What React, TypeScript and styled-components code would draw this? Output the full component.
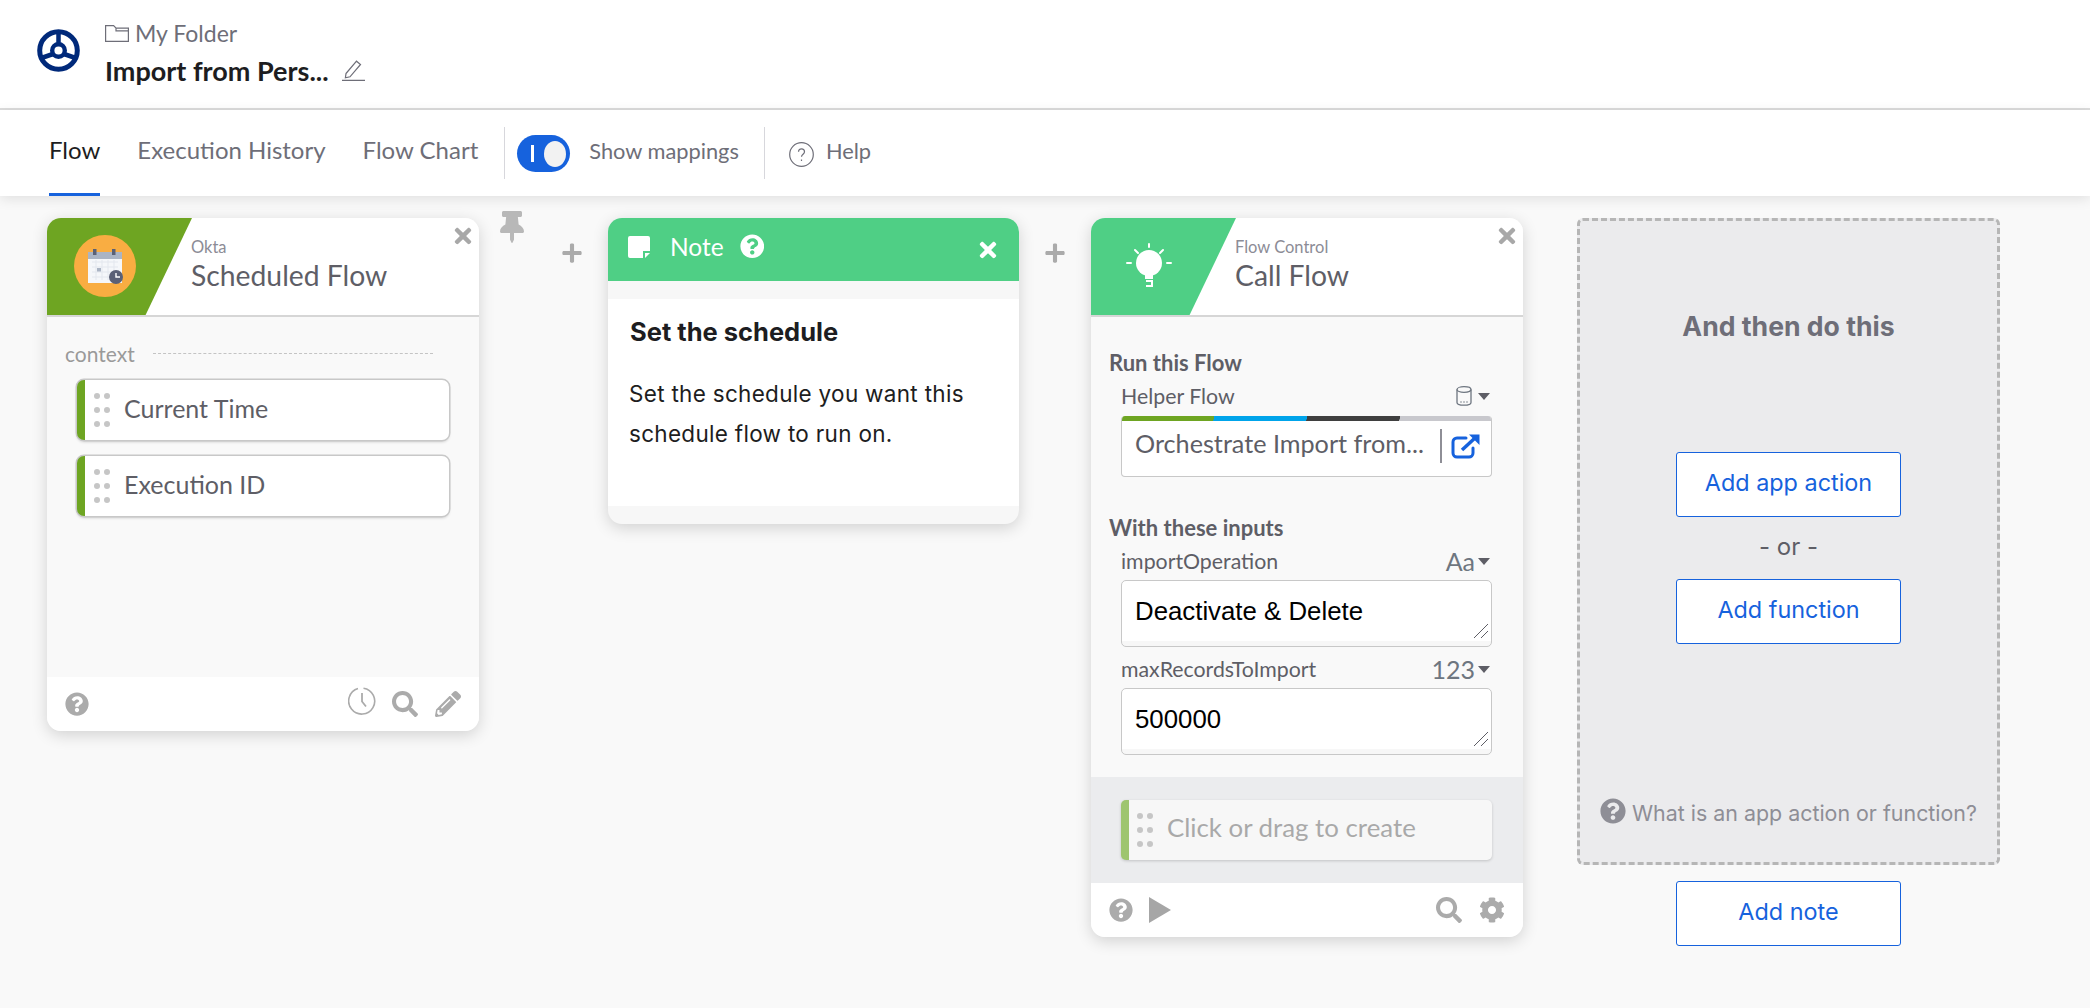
import React from 'react';
import styled, { createGlobalStyle } from 'styled-components';
import { FaQuestionCircle, FaSearch, FaPencilAlt, FaCog, FaTimes, FaPlus, FaThumbtack } from 'react-icons/fa';

const Global = createGlobalStyle`
  html, body { margin: 0; padding: 0; background: #f9f9f9; }
  body { font-family: "Lato", "Liberation Sans", sans-serif; }
  * { box-sizing: border-box; }
`;

const Page = styled.div`
  width: 2090px;
  height: 1008px;
  overflow: hidden;
  background: #f9f9f9;
  display: flex;
  flex-direction: column;
`;

const Header = styled.header`
  height: 110px;
  flex: none;
  background: #fff;
  border-bottom: 2px solid #dcdcdc;
  display: flex;
  align-items: flex-start;
  padding: 29px 0 0 37px;
  gap: 25px;
`;

const TitleBlock = styled.div`
  display: flex;
  flex-direction: column;
  margin-top: -11px;
`;

const Crumb = styled.div`
  display: flex;
  align-items: center;
  gap: 6px;
  height: 30px;
  font-size: 23px;
  color: #6e6e78;
`;

const FlowTitle = styled.div`
  display: flex;
  align-items: center;
  gap: 13px;
  height: 42px;
  margin-top: 1px;
  font-size: 27px;
  font-weight: 700;
  color: #1d1d21;
`;

const Nav = styled.nav`
  height: 86px;
  flex: none;
  background: #fff;
  box-shadow: 0 3px 12px rgba(0, 0, 0, 0.1);
  display: flex;
  align-items: stretch;
  padding-left: 49px;
  position: relative;
  z-index: 1;
`;

const Tab = styled.div<{ $active?: boolean; $gap: number }>`
  display: flex;
  align-items: center;
  padding-bottom: 5px;
  margin-right: ${(p) => p.$gap}px;
  font-size: 24px;
  color: ${(p) => (p.$active ? '#1d1d21' : '#6e6e78')};
  border-bottom: 3px solid ${(p) => (p.$active ? '#1662dd' : 'transparent')};
`;

const Divider = styled.div`
  width: 1px;
  height: 52px;
  margin-top: 17px;
  background: #d7d7dc;
`;

const Toggle = styled.div`
  width: 53px;
  height: 37px;
  margin: 25px 19px 0 12px;
  border-radius: 19px;
  background: #1662dd;
  display: flex;
  align-items: center;
  padding: 0 4px 0 14px;
  justify-content: space-between;
`;

const ToggleBar = styled.span`
  width: 3px;
  height: 17px;
  background: #fff;
`;

const ToggleKnob = styled.span`
  width: 22px;
  height: 26px;
  border-radius: 50%;
  background: #f2f2f2;
`;

const NavLabel = styled.div<{ $gap?: number }>`
  display: flex;
  align-items: center;
  padding-bottom: 6px;
  margin-right: ${(p) => p.$gap ?? 0}px;
  font-size: 21.8px;
  color: #6e6e78;
`;

const HelpWrap = styled.div`
  display: flex;
  align-items: center;
  margin: 2px 12px 0 24px;
  color: #6e6e78;
`;

const Canvas = styled.main`
  flex: 1;
  display: flex;
  align-items: flex-start;
  padding: 22px 0 0 47px;
`;

const Card = styled.section<{ $height: number }>`
  width: 432px;
  height: ${(p) => p.$height}px;
  flex: none;
  display: flex;
  flex-direction: column;
  border-radius: 14px;
  background: #f9f9f9;
  box-shadow: 0 4px 16px rgba(0, 0, 0, 0.16);
  overflow: hidden;
`;

const CardHead = styled.div`
  height: 99px;
  flex: none;
  background: #fff;
  border-bottom: 2px solid #d6d6d6;
  display: flex;
  position: relative;
`;

const Wedge = styled.div<{ $color: string; $x: number; $y: number }>`
  width: 145px;
  height: 97px;
  flex: none;
  background: ${(p) => p.$color};
  clip-path: polygon(0 0, 100% 0, 68% 100%, 0 100%);
  display: flex;
  padding: ${(p) => p.$y}px 0 0 ${(p) => p.$x}px;
`;

const HeadText = styled.div`
  display: flex;
  flex-direction: column;
  padding-top: 18px;
  margin-left: -1px;
`;

const Vendor = styled.div`
  font-size: 16.5px;
  line-height: 22px;
  color: #8c8c96;
`;

const CardName = styled.div`
  font-size: 28.3px;
  line-height: 34px;
  color: #5e5e66;
`;

const CloseBtn = styled.div`
  position: absolute;
  top: 6px;
  right: 4px;
  font-size: 24px;
  line-height: 1;
  display: flex;
  color: #a8a8a8;
`;

const CardBody = styled.div`
  flex: 1;
  padding: 24px 18px 0;
`;

const ContextRow = styled.div`
  display: flex;
  align-items: center;
  gap: 18px;
  height: 24px;
  margin-bottom: 15px;
  font-size: 21px;
  color: #9a9a9a;
`;

const DashLine = styled.div`
  width: 280px;
  border-top: 1px dashed #c4c4c4;
`;

const Output = styled.div`
  width: 372px;
  height: 60px;
  margin: 0 0 16px 12px;
  display: flex;
  align-items: center;
  background: #fff;
  border-radius: 7px;
  border-left: 8px solid #6ea522;
  box-shadow: 0 0 0 1.5px #c8c8c8, 0 2px 3px rgba(0, 0, 0, 0.18);
  font-size: 25px;
  color: #5e5e66;
  & > span {
    margin: -4px 0 0 -1px;
  }
`;

const Grip = styled.div`
  display: grid;
  grid-template-columns: 6px 6px;
  gap: 8px 4px;
  margin: 0 15px 0 9px;
  & > i {
    width: 6px;
    height: 6px;
    border-radius: 50%;
    background: #c6c6c6;
  }
`;

const CardFoot = styled.div`
  height: 54px;
  flex: none;
  background: #fff;
  display: flex;
  align-items: center;
  padding: 0 18px 0 18px;
  font-size: 24px;
  color: #ababab;
`;

const Spacer = styled.div`
  flex: 1;
`;

const FootIcon = styled.span<{ $gap?: number; $lift?: number }>`
  display: flex;
  margin-left: ${(p) => p.$gap ?? 0}px;
  margin-bottom: ${(p) => p.$lift ?? 0}px;
  font-size: 26px;
`;

const Gutter = styled.div<{ $width: number; $pad: number }>`
  width: ${(p) => p.$width}px;
  flex: none;
  height: 46px;
  display: flex;
  align-items: flex-end;
  padding: 0 0 0 ${(p) => p.$pad}px;
  justify-content: flex-start;
  color: #ababab;
  font-size: 22px;
  position: relative;
`;

const Pin = styled.span`
  position: absolute;
  top: -7px;
  left: 17px;
  font-size: 32px;
  display: flex;
  color: #b8b8b8;
`;

const NoteCard = styled.section`
  width: 411px;
  height: 306px;
  flex: none;
  border-radius: 14px;
  background: #f7f7f7;
  box-shadow: 0 4px 16px rgba(0, 0, 0, 0.16);
  overflow: hidden;
  display: flex;
  flex-direction: column;
`;

const NoteHead = styled.div`
  height: 63px;
  flex: none;
  background: #4fcf85;
  color: #fff;
  display: flex;
  align-items: center;
  padding: 0 19px 6px 20px;
  font-size: 24.5px;
  position: relative;
`;

const NoteName = styled.span`
  margin: 0 16px 0 20px;
`;

const NoteClose = styled.span`
  margin-left: auto;
  display: flex;
  font-size: 24px;
  padding-top: 6px;
`;

const NoteBody = styled.div`
  margin-top: 18px;
  height: 207px;
  background: #fff;
  padding: 16px 10px 0 22px;
  font-family: "Inter", sans-serif;
`;

const NoteTitle = styled.h3`
  margin: 0 0 25px;
  font-size: 25.5px;
  line-height: 34px;
  font-weight: 700;
  color: #1d1d21;
`;

const NoteText = styled.p`
  margin: 0 0 0 -1px;
  font-size: 22.5px;
  letter-spacing: 0.3px;
  line-height: 40px;
  color: #1d1d21;
`;

const FlowBody = styled.div`
  flex: 1;
  padding: 33px 30px 0 18px;
  display: flex;
  flex-direction: column;
`;

const SectionLabel = styled.div<{ $top?: number }>`
  margin-top: ${(p) => p.$top ?? 0}px;
  font-size: 22px;
  line-height: 26px;
  font-weight: 700;
  color: #5e5e66;
`;

const FieldHead = styled.div<{ $top?: number }>`
  display: flex;
  justify-content: space-between;
  align-items: center;
  height: 26px;
  padding-bottom: 4px;
  margin: ${(p) => p.$top ?? 9}px 3px 0 12px;
  font-size: 21.3px;
  color: #5e5e66;
`;

const TypeTag = styled.span`
  display: flex;
  align-items: center;
  gap: 3px;
  font-size: 25px;
  color: #6e7680;
  & > svg {
    margin-right: 3px;
  }
`;

const Caret = styled.i`
  width: 0;
  height: 0;
  border-left: 6px solid transparent;
  border-right: 6px solid transparent;
  border-top: 7px solid #5e5e66;
`;

const Picker = styled.div`
  height: 61px;
  margin: 5px 0 0 12px;
  width: 371px;
  background: #fff;
  border: 1px solid #c8c8c8;
  border-top: none;
  border-radius: 4px;
  overflow: hidden;
  display: flex;
  flex-direction: column;
`;

const Stripes = styled.div`
  height: 5px;
  flex: none;
  margin: 0 -1px;
  background: linear-gradient(100deg, #6ea522 25%, #00a4ea 25.1%, #00a4ea 50%, #3f3f3f 50.1%, #3f3f3f 75%, #c8c8cd 75.1%);
`;

const PickerRow = styled.div`
  flex: 1;
  display: flex;
  align-items: center;
  padding: 0 12px 5px 13px;
  font-size: 25.2px;
  color: #5e5e66;
  & > span {
    margin-top: -6px;
  }
`;

const PickerText = styled.span`
  width: 305px;
  flex: none;
  white-space: nowrap;
`;

const PickerRule = styled.i`
  width: 2px;
  height: 34px;
  flex: none;
  background: #8e8e96;
  margin-right: 9px;
`;

const TextArea = styled.div`
  width: 371px;
  height: 67px;
  margin: 4px 0 0 12px;
  border: 1px solid #c8c8c8;
  border-radius: 5px;
  background: linear-gradient(#fff 60px, #f7f7f7 60px);
  padding: 14px 13px 0;
  font-family: "Liberation Sans", Arial, sans-serif;
  font-size: 25.8px;
  line-height: 32px;
  color: #000;
  position: relative;
`;

const Grabber = styled.svg`
  position: absolute;
  right: 2px;
  bottom: 7px;
`;

const Tray = styled.div`
  height: 106px;
  flex: none;
  background: #ebecee;
  padding: 23px 0 0 30px;
`;

const Placeholder = styled.div`
  width: 371px;
  height: 60px;
  display: flex;
  align-items: center;
  border-radius: 5px;
  border-left: 8px solid #9ec56f;
  background: #f7f7f7;
  box-shadow: 0 1px 3px rgba(0, 0, 0, 0.18);
  font-size: 25.8px;
  line-height: 30px;
  color: #a9a9a9;
  & > div {
    margin: 0 14px 0 8px;
  }
  & > span {
    margin-top: -6px;
  }
`;

const ActionColumn = styled.div`
  width: 423px;
  flex: none;
  display: flex;
  flex-direction: column;
  align-items: center;
`;

const DropZone = styled.div`
  width: 100%;
  height: 647px;
  border: 3px dashed #b6b6b6;
  border-radius: 6px;
  background: #ebebed;
  display: flex;
  flex-direction: column;
  align-items: center;
  padding-top: 89px;
  font-family: "Inter", sans-serif;
`;

const ZoneTitle = styled.div`
  font-size: 26.6px;
  line-height: 32px;
  font-weight: 700;
  color: #6e6e78;
  margin-bottom: 110px;
`;

const AddButton = styled.button`
  width: 225px;
  height: 65px;
  flex: none;
  background: #fff;
  border: 1px solid #1662dd;
  border-radius: 3px;
  font-family: "Inter", sans-serif;
  font-size: 23.4px;
  color: #1662dd;
  padding: 0 0 4px;
`;

const OrText = styled.div`
  height: 62px;
  display: flex;
  align-items: center;
  padding-bottom: 3px;
  font-size: 24px;
  color: #5e5e66;
`;

const WhatIs = styled.div`
  margin-top: auto;
  margin-bottom: 36px;
  display: flex;
  align-items: center;
  gap: 6px;
  font-size: 21.4px;
  color: #8e8e96;
  & > svg {
    margin-top: -4px;
  }
`;

const NoteButton = styled(AddButton)`
  margin-top: 16px;
`;

const Logo = () => (
  <svg width="43" height="43" viewBox="0 0 43 43" style={{ flex: 'none' }}>
    <circle cx="21.5" cy="21.5" r="18.8" fill="none" stroke="#00297a" strokeWidth="5" />
    <circle cx="21.5" cy="21.5" r="6.3" fill="none" stroke="#00297a" strokeWidth="4.4" />
    <path d="M21.5 3v12M16 25L3 29.5M27 25l13 4.5" stroke="#00297a" strokeWidth="4.5" fill="none" />
  </svg>
);

const Folder = () => (
  <svg width="24" height="17" viewBox="0 0 24 17" fill="none" stroke="#6e6e78" strokeWidth="1.2">
    <path d="M.6 16.4V.6h8l2.5 2.6h12.3v13.2zM11 3.2v2.6h12.4" />
  </svg>
);

const EditIcon = () => (
  <svg width="23" height="21" viewBox="0 0 23 21" fill="none" stroke="#6e6e78" strokeWidth="1.2">
    <path d="M4 13.5L14.5 1.2l4 3.3L8 16.8l-4.6 1z M0 20.4h23" />
  </svg>
);

const HelpCircle = () => (
  <svg width="25" height="25" viewBox="0 0 25 25" fill="none" stroke="#6e6e78" strokeWidth="1.2">
    <circle cx="12.5" cy="12.5" r="11.8" />
    <path d="M9.5 9.8c0-4 6-4 6 0 0 2.4-3 2.4-3 5M12.5 17.5v1.5" />
  </svg>
);

const CalendarBadge = () => (
  <svg width="62" height="62" viewBox="0 0 62 62">
    <circle cx="31" cy="31" r="31" fill="#f9ad42" />
    <rect x="14" y="17" width="34" height="31" fill="#f5f7fa" />
    <rect x="14" y="17" width="34" height="7" fill="#aab4c4" />
    <rect x="19" y="14" width="3.5" height="6" fill="#5a6076" />
    <rect x="38" y="14" width="3.5" height="6" fill="#5a6076" />
    <path d="M18 27h26M18 32h26M18 37h26M18 42h26M22 25v20M28 25v20M34 25v20M40 25v20" stroke="#e3e7ee" strokeWidth="1" />
    <rect x="23" y="33" width="4" height="3.5" fill="#aab4c4" />
    <circle cx="42" cy="42" r="7" fill="#5a6076" />
    <path d="M42 38v4h4" stroke="#fff" strokeWidth="1.4" fill="none" />
  </svg>
);

const Bulb = () => (
  <svg width="46" height="46" viewBox="0 0 46 46" fill="none" stroke="#fff" strokeWidth="2" strokeLinecap="round">
    <path d="M23 1v3M9 7l3 3M37 7l-3 3M1 20h4M41 20h4" />
    <circle cx="23" cy="20" r="13" fill="#fff" stroke="none" />
    <path d="M19 31h8v5h-8z" fill="#fff" stroke="none" />
    <path d="M20 38h6v5h-6" strokeLinecap="butt" />
  </svg>
);

const ClockIcon = () => (
  <svg width="28" height="28" viewBox="0 0 28 28" fill="none" stroke="#ababab" strokeWidth="1.6">
    <path d="M15.5 1.2A13 13 0 1 1 10 1.6" />
    <path d="M14 6v8.5l4 5" strokeWidth="1.8" />
  </svg>
);

const PlayIcon = () => (
  <svg width="22" height="26" viewBox="0 0 22 26">
    <path d="M0 0l22 13L0 26z" fill="#a6a6a6" />
  </svg>
);

const NoteGlyph = () => (
  <svg width="22" height="22" viewBox="0 0 22 22">
    <path d="M2 0h18a2 2 0 0 1 2 2v13h-7v7H2a2 2 0 0 1-2-2V2a2 2 0 0 1 2-2z" fill="#fff" />
    <path d="M17 17h5l-5 5z" fill="#fff" />
  </svg>
);

const Cylinder = () => (
  <svg width="16" height="20" viewBox="0 0 16 20" fill="none" stroke="#6e7680" strokeWidth="1.3">
    <path d="M1 3.5v13c0 3.6 14 3.6 14 0v-13" />
    <ellipse cx="8" cy="3.5" rx="7" ry="2.8" />
    <path d="M4 16h2M7 16h2M10 16h2" strokeWidth="0.8" />
  </svg>
);

const ExternalLink = () => (
  <svg width="30" height="26" viewBox="0 0 30 26" fill="none" stroke="#1662dd" strokeWidth="3" style={{ flex: 'none' }}>
    <path d="M22 15v5a4 4 0 0 1-4 4H6a4 4 0 0 1-4-4V9a4 4 0 0 1 4-4h9" strokeLinecap="round" />
    <path d="M11 17L24 5" strokeWidth="3.5" />
    <path d="M18 1.5h10.5V12z" fill="#1662dd" stroke="none" />
  </svg>
);

const GripDots = () => (
  <Grip>
    {Array.from({ length: 6 }).map((_, i) => (
      <i key={i} />
    ))}
  </Grip>
);

const ResizeGrip = () => (
  <Grabber width="16" height="16" viewBox="0 0 16 16" stroke="#5e5e66" strokeWidth="1">
    <path d="M1 15L15 1M8 15l7-7" />
  </Grabber>
);

export default function App() {
  return (
    <Page>
      <Global />
      <Header>
        <Logo />
        <TitleBlock>
          <Crumb>
            <Folder />
            My Folder
          </Crumb>
          <FlowTitle>
            Import from Pers...
            <EditIcon />
          </FlowTitle>
        </TitleBlock>
      </Header>
      <Nav>
        <Tab $active $gap={37}>Flow</Tab>
        <Tab $gap={37}>Execution History</Tab>
        <Tab $gap={26}>Flow Chart</Tab>
        <Divider />
        <Toggle>
          <ToggleBar />
          <ToggleKnob />
        </Toggle>
        <NavLabel $gap={25}>Show mappings</NavLabel>
        <Divider />
        <HelpWrap>
          <HelpCircle />
        </HelpWrap>
        <NavLabel>Help</NavLabel>
      </Nav>
      <Canvas>
        <Card $height={513}>
          <CardHead>
            <Wedge $color="#6ea522" $x={27} $y={17}>
              <CalendarBadge />
            </Wedge>
            <HeadText>
              <Vendor>Okta</Vendor>
              <CardName>Scheduled Flow</CardName>
            </HeadText>
            <CloseBtn><FaTimes /></CloseBtn>
          </CardHead>
          <CardBody>
            <ContextRow>
              context
              <DashLine />
            </ContextRow>
            <Output><GripDots /><span>Current Time</span></Output>
            <Output><GripDots /><span>Execution ID</span></Output>
          </CardBody>
          <CardFoot>
            <FaQuestionCircle />
            <Spacer />
            <FootIcon $lift={6}><ClockIcon /></FootIcon>
            <FootIcon $gap={16}><FaSearch /></FootIcon>
            <FootIcon $gap={17}><FaPencilAlt /></FootIcon>
          </CardFoot>
        </Card>
        <Gutter $width={129} $pad={82}>
          <Pin><FaThumbtack /></Pin>
          <FaPlus />
        </Gutter>
        <NoteCard>
          <NoteHead>
            <NoteGlyph />
            <NoteName>Note</NoteName>
            <FaQuestionCircle />
            <NoteClose><FaTimes /></NoteClose>
          </NoteHead>
          <NoteBody>
            <NoteTitle>Set the schedule</NoteTitle>
            <NoteText>Set the schedule you want this schedule flow to run on.</NoteText>
          </NoteBody>
        </NoteCard>
        <Gutter $width={72} $pad={25}>
          <FaPlus />
        </Gutter>
        <Card $height={719}>
          <CardHead>
            <Wedge $color="#4fcf85" $x={35} $y={25}>
              <Bulb />
            </Wedge>
            <HeadText>
              <Vendor>Flow Control</Vendor>
              <CardName>Call Flow</CardName>
            </HeadText>
            <CloseBtn><FaTimes /></CloseBtn>
          </CardHead>
          <FlowBody>
            <SectionLabel>Run this Flow</SectionLabel>
            <FieldHead>
              Helper Flow
              <TypeTag><Cylinder /><Caret /></TypeTag>
            </FieldHead>
            <Picker>
              <Stripes />
              <PickerRow>
                <PickerText>Orchestrate Import from...</PickerText>
                <PickerRule />
                <ExternalLink />
              </PickerRow>
            </Picker>
            <SectionLabel $top={38}>With these inputs</SectionLabel>
            <FieldHead>
              importOperation
              <TypeTag>Aa<Caret /></TypeTag>
            </FieldHead>
            <TextArea>Deactivate &amp; Delete<ResizeGrip /></TextArea>
            <FieldHead $top={11}>
              maxRecordsToImport
              <TypeTag>123<Caret /></TypeTag>
            </FieldHead>
            <TextArea>500000<ResizeGrip /></TextArea>
          </FlowBody>
          <Tray>
            <Placeholder><GripDots /><span>Click or drag to create</span></Placeholder>
          </Tray>
          <CardFoot>
            <FaQuestionCircle />
            <FootIcon $gap={16}><PlayIcon /></FootIcon>
            <Spacer />
            <FootIcon><FaSearch /></FootIcon>
            <FootIcon $gap={17}><FaCog /></FootIcon>
          </CardFoot>
        </Card>
        <Gutter $width={54} $pad={0} />
        <ActionColumn>
          <DropZone>
            <ZoneTitle>And then do this</ZoneTitle>
            <AddButton>Add app action</AddButton>
            <OrText>- or -</OrText>
            <AddButton>Add function</AddButton>
            <WhatIs>
              <FaQuestionCircle size={26} />
              What is an app action or function?
            </WhatIs>
          </DropZone>
          <NoteButton>Add note</NoteButton>
        </ActionColumn>
      </Canvas>
    </Page>
  );
}
